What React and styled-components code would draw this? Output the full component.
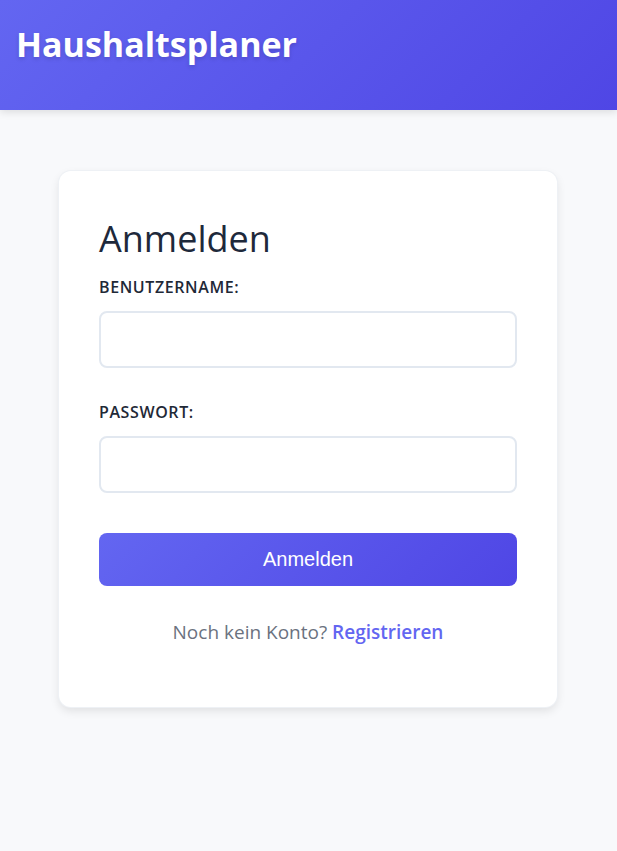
import styled, { createGlobalStyle } from "styled-components";

const GlobalStyle = createGlobalStyle`
  * {
    box-sizing: border-box;
  }
  body {
    margin: 0;
    background-color: #f8f9fb;
    font-family: "Open Sans", "Noto Sans", sans-serif;
    color: #1f2937;
  }
`;

const StyledHeader = styled.header`
  height: 110px;
  padding: 0 16px;
  display: flex;
  align-items: flex-start;
  background: linear-gradient(135deg, #6366f1 0%, #4f46e5 100%);
  box-shadow: 0 2px 8px rgba(0, 0, 0, 0.12);
`;

const StyledTitle = styled.h1`
  margin: 21px 0 0;
  font-size: 34px;
  font-weight: 700;
  color: white;
  text-shadow: 0 2px 4px rgba(0, 0, 0, 0.15);
`;

const StyledMain = styled.main`
  display: flex;
  justify-content: center;
  padding: 61px 1px 40px 0;
`;

const StyledCard = styled.section`
  width: 498px;
  padding: 46px 40px 61px;
  background-color: white;
  border-radius: 12px;
  box-shadow: 0 0 0 1px #eef1f5, 0 4px 10px rgba(0, 0, 0, 0.1);
`;

const StyledHeading = styled.h2`
  margin: 0 0 15px;
  font-size: 36px;
  line-height: 43px;
  font-weight: 500;
  color: #1e293b;
`;

const StyledForm = styled.form`
  display: flex;
  flex-direction: column;
`;

const StyledLabel = styled.label`
  font-size: 16px;
  line-height: 24px;
  font-weight: 600;
  letter-spacing: 0.6px;
  text-transform: uppercase;
  color: #1f2937;
`;

const StyledInput = styled.input`
  width: 100%;
  height: 57px;
  margin-block: 12px 32px;
  padding: 12px;
  border: 2px solid #e2e8f0;
  border-radius: 8px;
  font-size: 16px;
  font-family: inherit;
`;

const StyledSubmitButton = styled.button`
  height: 53px;
  margin-top: 8px;
  border: none;
  border-radius: 8px;
  background: linear-gradient(135deg, #6366f1 0%, #4f46e5 100%);
  color: white;
  font-family: "Liberation Sans", Arial, sans-serif;
  font-size: 20px;
  cursor: pointer;
`;

const StyledHint = styled.p`
  margin: 33px 0 0;
  text-align: center;
  font-size: 19px;
  line-height: 27px;
  color: #6b7280;
`;

const StyledLink = styled.a`
  color: #6366f1;
  font-weight: 600;
  text-decoration: none;
`;

export default function App() {
  function handleSubmit(event) {
    event.preventDefault();
  }
  return (
    <>
      <GlobalStyle />
      <StyledHeader>
        <StyledTitle>Haushaltsplaner</StyledTitle>
      </StyledHeader>
      <StyledMain>
        <StyledCard>
          <StyledHeading>Anmelden</StyledHeading>
          <StyledForm onSubmit={handleSubmit}>
            <StyledLabel htmlFor="username">Benutzername:</StyledLabel>
            <StyledInput id="username" name="username" type="text" />
            <StyledLabel htmlFor="password">Passwort:</StyledLabel>
            <StyledInput id="password" name="password" type="password" />
            <StyledSubmitButton type="submit">Anmelden</StyledSubmitButton>
          </StyledForm>
          <StyledHint>
            Noch kein Konto? <StyledLink href="#">Registrieren</StyledLink>
          </StyledHint>
        </StyledCard>
      </StyledMain>
    </>
  );
}
